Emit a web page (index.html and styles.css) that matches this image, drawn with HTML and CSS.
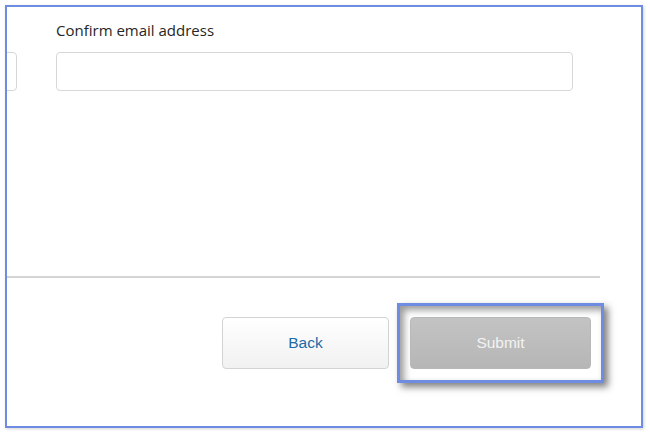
FILE: index.html
```html
<!DOCTYPE html>
<html lang="en">
<head>
<meta charset="utf-8">
<title>Confirm email</title>
<link rel="stylesheet" href="styles.css">
</head>
<body>
<div class="frame">
  <form class="form">
    <div class="fields">
      <div class="field">
        <span class="label">&nbsp;</span>
        <input class="input" type="email" aria-label="Email address">
      </div>
      <div class="field">
        <label class="label">Confirm email address</label>
        <input class="input" type="email">
      </div>
    </div>
    <div class="divider"></div>
    <div class="actions">
      <button type="button" class="btn btn-back">Back</button>
      <span class="highlight"><button type="button" class="btn btn-submit">Submit</button></span>
    </div>
  </form>
</div>
</body>
</html>
```

FILE: styles.css
```css
html, body {
  margin: 0;
  padding: 0;
  background: #ffffff;
}
body {
  padding: 5px;
  font-family: "Open Sans", "Noto Sans", sans-serif;
}
.frame {
  width: 634px;
  height: 419px;
  border: 2px solid #6e8de2;
  box-shadow: 1px 1px 3px rgba(0, 0, 0, 0.18);
  overflow: hidden;
  background: #fff;
}
.form {
  margin-left: -507px;
  width: 1100px;
}
.fields {
  display: flex;
  gap: 39px;
  padding-top: 13px;
}
.field {
  width: 517px;
  display: flex;
  flex-direction: column;
}
.label {
  font-size: 15px;
  line-height: 20px;
  color: #262626;
  margin-bottom: 12px;
}
.input {
  box-sizing: border-box;
  width: 517px;
  height: 39px;
  border: 1px solid #d7d7d7;
  border-radius: 4px;
  background: #fff;
  margin: 0;
  padding: 0 10px;
}
.divider {
  margin-top: 185px;
  width: 1100px;
  border-top: 2px solid #d4d4d4;
}
.actions {
  display: flex;
  justify-content: flex-end;
  align-items: center;
  gap: 21px;
  padding-top: 39px;
  padding-right: 9px;
}
.btn {
  box-sizing: border-box;
  height: 52px;
  font-family: "Liberation Sans", Arial, sans-serif;
  font-size: 15.5px;
  border-radius: 4px;
  margin: 0;
  cursor: pointer;
}
.btn-back {
  width: 167px;
  border: 1px solid #d3d3d3;
  background: linear-gradient(#ffffff, #f1f1f1);
  color: #1e6aa6;
}
.btn-submit {
  display: block;
  width: 181px;
  border: 1px solid #b8b8b8;
  background: linear-gradient(#c3c3c3, #b6b6b6);
  color: #f3f3f3;
}
.highlight {
  display: block;
  margin: -14px -13px;
  padding: 11px 10px;
  border: 3px solid #6e8de2;
  box-shadow: 4px 4px 7px rgba(0, 0, 0, 0.5), inset 4px 4px 7px rgba(0, 0, 0, 0.4);
}
```
